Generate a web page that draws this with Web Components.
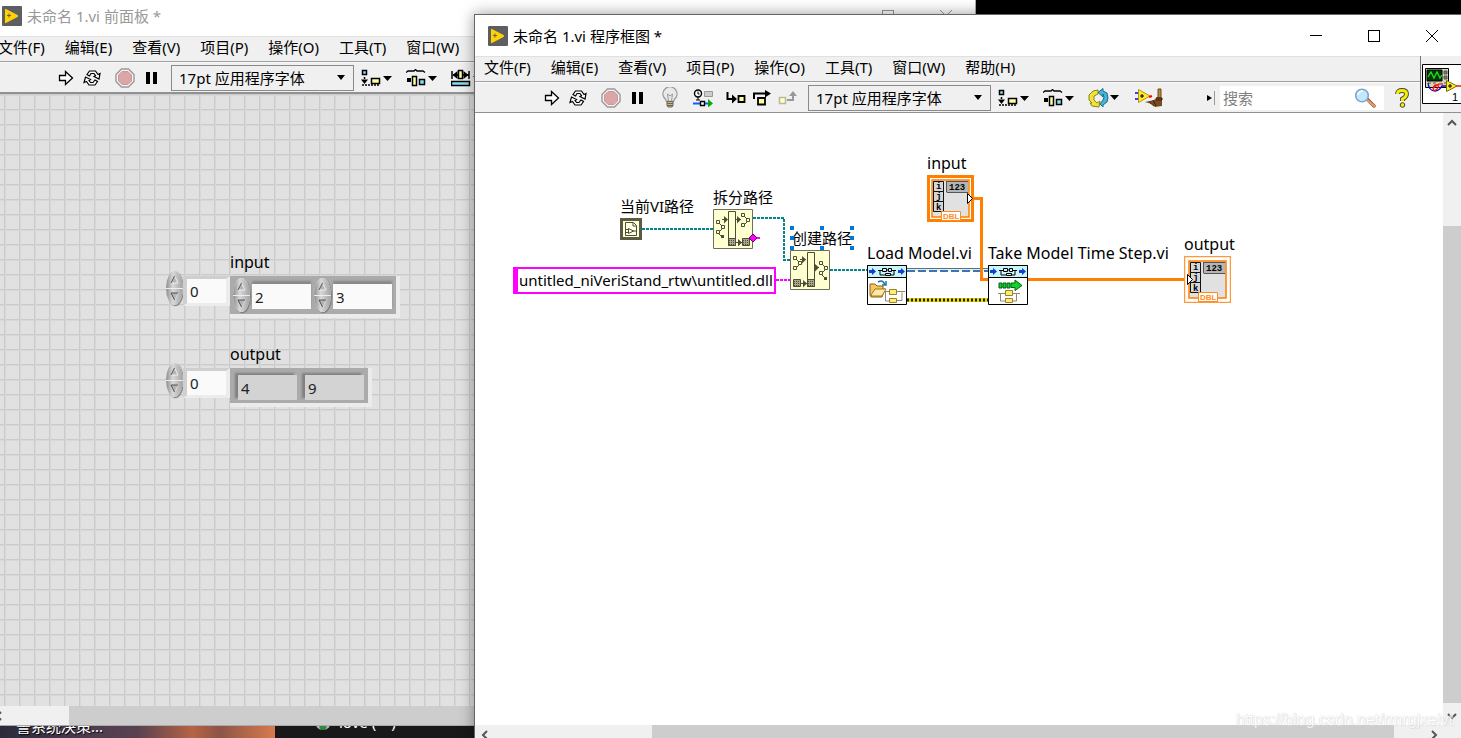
<!DOCTYPE html>
<html lang="zh-CN">
<head>
<meta charset="utf-8">
<title>未命名 1.vi</title>
<style>
    body {
        margin: 0;
        height: 100vh;
        overflow: hidden;
        background: #000;
        color: #000;
        font-family: "Noto Sans", "Noto Sans CJK SC", sans-serif;
        font-size: 15px;
    }

    /* windows on the desktop */
    .front-panel {
        position: absolute;
        top: -6px;
        left: -12px;
        right: 33.2%;
        bottom: 12px;
    }

    .block-diagram {
        position: absolute;
        top: 14px;
        left: 474px;
        right: -1px;
        bottom: -7px;
    }

    .watermark {
        position: absolute;
        right: 8px;
        bottom: 8px;
        font: 16px/20px "Liberation Sans", sans-serif;
        color: #fff;
        text-shadow: 0 0 1px #aaa, 1px 1px 1px #ddd;
        opacity: 0.7;
        pointer-events: none;
    }
</style>
</head>
<body>
<desk-top></desk-top>

<vi-window class="front-panel" heading="未命名 1.vi 前面板 *" inactive before="61" thumb="869" after="0">
    <vi-menubar slot="menu"></vi-menubar>
    <vi-toolbar slot="toolbar">
        <tool-group>
            <tool-button icon="run" label="运行"></tool-button>
            <tool-button icon="loop" label="连续运行"></tool-button>
        </tool-group>
        <tool-group>
            <tool-button icon="abort" label="中止执行"></tool-button>
            <tool-button icon="pause" label="暂停"></tool-button>
        </tool-group>
        <font-select></font-select>
        <tool-button wide icon="align" label="对齐对象"></tool-button>
        <tool-button wide icon="distribute" label="分布对象"></tool-button>
        <tool-button wide icon="resize" label="调整对象大小"></tool-button>
    </vi-toolbar>
    <panel-canvas>
        <array-control style="left: 177px; top: 158px" name="input" index="0" values="2,3"></array-control>
        <array-control style="left: 177px; top: 250px" name="output" index="0" values="4,9" indicator></array-control>
    </panel-canvas>
</vi-window>

<vi-window class="block-diagram" heading="未命名 1.vi 程序框图 *" before="158" thumb="742" after="30">
    <vi-menubar slot="menu"></vi-menubar>
    <vi-toolbar slot="toolbar">
        <tool-group>
            <tool-button icon="run" label="运行"></tool-button>
            <tool-button icon="loop" label="连续运行"></tool-button>
        </tool-group>
        <tool-group>
            <tool-button icon="abort" label="中止执行"></tool-button>
            <tool-button icon="pause" label="暂停"></tool-button>
        </tool-group>
        <tool-group>
            <tool-button icon="bulb" label="高亮显示执行过程"></tool-button>
        </tool-group>
        <tool-group>
            <tool-button icon="retain" label="保存连线值"></tool-button>
        </tool-group>
        <tool-group>
            <tool-button icon="into" label="开始单步执行"></tool-button>
            <tool-button icon="over" label="单步步过"></tool-button>
            <tool-button icon="out" label="单步步出"></tool-button>
        </tool-group>
        <font-select></font-select>
        <tool-button wide icon="align" label="对齐对象"></tool-button>
        <tool-button wide icon="distribute" label="分布对象"></tool-button>
        <tool-button wide icon="reorder" label="重新排序"></tool-button>
        <tool-button wide icon="clean" label="整理程序框图"></tool-button>
        <search-box slot="end"></search-box>
        <tool-button slot="end" help icon="help" label="即时帮助"></tool-button>
    </vi-toolbar>
    <vi-icon slot="pane" name="pane"></vi-icon>
    <diagram-canvas>
        <diagram-node style="left: 145px; top: 83px" icon="thisvi">当前VI路径</diagram-node>
        <diagram-node style="left: 238px; top: 74px" icon="strip">拆分路径</diagram-node>
        <diagram-node style="left: 315px; top: 115px" icon="build" selected>创建路径</diagram-node>
        <diagram-node style="left: 392px; top: 130px" icon="load" latin>Load Model.vi</diagram-node>
        <diagram-node style="left: 513px; top: 130px" icon="step" latin>Take Model Time Step.vi</diagram-node>
        <diagram-node style="left: 452px; top: 40px" icon="control" latin>input</diagram-node>
        <diagram-node style="left: 709px; top: 121px" icon="indicator" latin>output</diagram-node>
        <string-constant style="left: 38px; top: 154px">untitled_niVeriStand_rtw\untitled.dll</string-constant>
    </diagram-canvas>
</vi-window>

<div class="watermark">https://blog.csdn.net/rmrgjxeivt</div>

<script>
const ARROW_DOWN = `<path d="M22 7h9l-4.500 5z"/>`;

// every icon: [width, height, markup]
const ICONS = {
    logo: [20, 20, `
        <rect width="20" height="20" rx="1" fill="#5d5e62"/>
        <path d="M3 3.500Q3 2.500 4 3L15.500 9Q17 10 15.500 11L4 17Q3 17.500 3 16.500z" fill="#ffd200"/>
        <path d="M5 9.500h4M7 7.500v4" stroke="#5d5e62"/>`],
    run: [16, 16, `<path d="M1.500 5.500h6V1.500l7 6.500-7 6.500v-4h-6z" fill="#fff" stroke="#000" stroke-width="1.300"/>`],
    loop: [20, 18, `
        <g fill="#fff" stroke="#000" stroke-width="1.200">
            <path d="M5 5.500L7.500 2h6l2.500 3.500 2-1-1 5.500-5-2.500 1.500-1L12 4.500H9L7.500 7z"/>
            <path d="M15.500 12.500L13 16H7l-2.500-3.500-2.500 1L3.500 8l5 2.500-1.500 1L8.500 13.500H11l2-2.500z"/>
        </g>`],
    abort: [20, 20, `
        <path d="M6.500 1h7L19 6.500v7L13.500 19h-7L1 13.500v-7z" fill="#f7f7f7" stroke="#999" stroke-width="1.400"/>
        <path d="M7 3.500h6L16.500 7v6L13 16.500H7L3.500 13V7z" fill="#dda6a6" stroke="#c99"/>`],
    pause: [12, 14, `<path d="M1 1h4v12H1zM8 1h4v12H8z"/>`],
    bulb: [18, 22, `
        <path d="M5.500 14.500Q5 12.500 3 10.500A7 7 0 1 1 15 10.500Q13 12.500 12.500 14.500z" fill="#e9e9e9" stroke="#999" stroke-width="1.300"/>
        <path d="M7.500 14L6.500 7l2.500 2 2.500-2-1 7" fill="none" stroke="#999"/>
        <path d="M6 14.500h6v4l-1 1.500H7l-1-1.500z" fill="#c9b978" stroke="#6b6a58"/>
        <path d="M6 16.500h6M6 18.500h6" stroke="#666"/>`],
    retain: [20, 18, `
        <circle cx="5" cy="4.500" r="3.500" fill="#fff" stroke="#000" stroke-width="1.400"/>
        <path d="M5 2.500v2.500h1.500M5 8v3M3 11h4" stroke="#000" fill="none"/>
        <path d="M11.500 2.500h8v5h-8z" fill="#ccc" stroke="#999"/>
        <path d="M0 14.500h7M12 14.500h4" stroke="#06f" stroke-width="2"/>
        <path d="M7.500 12.500h4v4h-4z" fill="#fff" stroke="#000" stroke-width="1.400"/>
        <path d="M15 10l5 4.500-5 4z" fill="#0a1"/>`],
    into: [20, 14, `
        <path d="M1.500 1v7H9" fill="none" stroke="#000" stroke-width="2"/>
        <path d="M6 3.500L11 8l-5 4.500z"/>
        <path d="M12.500 5h6v6h-6z" fill="#ffffa0" stroke="#000" stroke-width="1.800"/>`],
    over: [18, 16, `
        <path d="M1 9V3.500h12" fill="none" stroke="#000" stroke-width="2"/>
        <path d="M12 0l6 3.500-6 4z"/>
        <path d="M5 8h7v6.500H5z" fill="#ffffa0" stroke="#000" stroke-width="1.800"/>`],
    out: [20, 14, `
        <path d="M1.500 6.500h6v6h-6z" fill="#ffffc8" stroke="#b9b99c" stroke-width="1.500"/>
        <path d="M9 9h6V4" fill="none" stroke="#999" stroke-width="2"/>
        <path d="M11 5l4-5 4 5z" fill="#999"/>`],
    align: [31, 18, `
        <path d="M1.500 1.500h4v4h-4z" fill="#7fe3f5" stroke="#000" stroke-width="1.500"/>
        <path d="M3.500 8v5M1 16h18" stroke="#000" stroke-width="1.500" stroke-dasharray="2 1"/>
        <path d="M0 10.500h7L3.500 15z"/>
        <path d="M10.500 9.500h8v5h-8z" fill="#ffff9c" stroke="#000" stroke-width="1.500"/>${ARROW_DOWN}`],
    distribute: [31, 18, `
        <path d="M0 3.500L2 2h6l1.500-1.500L11 2h6l2 1.500" fill="none" stroke="#000" stroke-width="1.300"/>
        <path d="M1 9h4v4H1z"/>
        <path d="M6.500 7.500h4v9h-4z" fill="#ffff9c" stroke="#000" stroke-width="1.500"/>
        <path d="M13.500 10.500h5v5h-5z" fill="#7fe3f5" stroke="#000" stroke-width="1.500"/>${ARROW_DOWN}`],
    resize: [31, 18, `
        <path d="M1 2v8M18 2v8M2 6h16" stroke="#000" stroke-width="1.500"/>
        <path d="M1.500 6l5-4v8zM17.500 6l-5-4v8z"/>
        <path d="M7.500 1.500h4v8h-4z" fill="#ffff9c" stroke="#000" stroke-width="1.500"/>
        <path d="M.5 12.500h18v4H.5z" fill="#7fe3f5" stroke="#000" stroke-width="1.500"/>${ARROW_DOWN}`],
    reorder: [31, 20, `
        <path d="M10 2L5 3 1 7v5l3 3h-2l2 3 7 1 1-6-3 2-3-3V8l4-2z" fill="#f0e23a" stroke="#8c8312"/>
        <path d="M10 4.500L15 .500V3l4 2 1 5-1 4-4 3v2l-3-3 3-4 1-3-1-3v3z" fill="#41b6d6" stroke="#1c6c87"/>${ARROW_DOWN}`],
    clean: [28, 20, `
        <path d="M0 5h3M0 11h3" stroke="#00f" stroke-width="1.500"/>
        <path d="M3.500 1.500L15 8 3.500 14.500z" fill="#ffe92e" stroke="#b59b00"/>
        <path d="M5 8h4M7 6v4" stroke="#000"/>
        <path d="M14 9l3-1" stroke="#f00" stroke-width="2"/>
        <path d="M23 1h3v9h-3z" fill="#b58a3a" stroke="#6b4a1c"/>
        <path d="M10 14l9-2 3-3 5 1v8l-7 1-3-3z" fill="#7a4a22"/>
        <path d="M14 14l5 4M18 12l3 6M21 10h6v2h-6" stroke="#3d230d" fill="none"/>`],
    help: [14, 20, `
        <path d="M2.500 6Q2.500 2.500 7 2.500T11.500 6q0 3-4 5v2" fill="none" stroke="#444" stroke-width="4.800"/>
        <path d="M2.500 6Q2.500 2.500 7 2.500T11.500 6q0 3-4 5v2" fill="none" stroke="#f6ec00" stroke-width="3"/>
        <circle cx="7.500" cy="17" r="2.300" fill="#f6ec00" stroke="#444"/>`],
    magnifier: [22, 20, `
        <path d="M13 11l7 7" stroke="#a54" stroke-width="3.500" stroke-linecap="round"/>
        <path d="M12 11l8 7" stroke="#d9a86a" stroke-width="2" stroke-linecap="round"/>
        <circle cx="8" cy="7.500" r="6.300" fill="#c4e8fb" stroke="#7ba3d8" stroke-width="1.600"/>
        <path d="M4 7q1-4 5-4" fill="none" stroke="#fff" stroke-width="1.500"/>`],
    pane: [40, 40, `
        <path d="M.5.5h39v39H.5z" fill="#fff" stroke="#000"/>
        <path d="M3.500 4.500h23v19h-23z" fill="#d8d6b8" stroke="#000"/>
        <path d="M5 6h15v11H5z" fill="#063806" stroke="#000"/>
        <path d="M6 13l3-5 3 6 3-6 3 6 2-3" fill="none" stroke="#1ee01e" stroke-width="1.300"/>
        <path d="M22 7h3v3h-3zM22 12h3v3h-3zM6 19h3M11 19h3M22 19h2" fill="#777" stroke="#555"/>
        <path d="M6 19q1 8 7 8 4 0 7-5h5" fill="none" stroke="#0a0acb" stroke-width="1.400"/>
        <path d="M11 25q1-5 4-4 3 1 0 4t-4 0q4-6 10-5M34 22h6" fill="none" stroke="#f11" stroke-width="1.300"/>
        <path d="M24.500 16.500L35 22l-10.500 5.500z" fill="#ffe92e" stroke="#7c6c00"/>
        <path d="M26 22h4M28 20v4" stroke="#000"/>
        <text x="30" y="37" font-family="Liberation Sans" font-size="11">1</text>`],
    thisvi: [22, 22, `
        <path d="M1.500 1.500h19v19h-19z" fill="#ffffcf" stroke="#5b5b45" stroke-width="3"/>
        <path d="M5.500 4.500h8l3 3v10h-11z" fill="#ffffe4" stroke="#4c4c38"/>
        <path d="M13 5v3h3M8.500 10.500v5l5-2.500zM6 11.500h2M6 14.500h2M13 13h3" fill="none" stroke="#4c4c38"/>`],
    strip: [40, 40, `
        <path d="M.5.5h39v39H.5z" fill="#ffffcf" stroke="#6e6e5a"/>
        <g fill="#ffffcf" stroke="#4c4c38">
            <path d="M3.500 11.500h3v3h-3zM8.500 16.500h3v3h-3zM3.500 21.500h3v3h-3z"/>
            <path d="M15.500 2.500h7v34h-7z"/>
            <path d="M28.500 4.500h3v3h-3zM33.500 9.500h3v3h-3zM28.500 14.500h3v3h-3z"/>
            <path d="M15.500 29.500h7v7h-7zM29.500 29.500h7v7h-7z" fill="#a9a98c"/>
            <path d="M6 14l3 3M9 20l-3 3M6 25l2 2M31 7l3 3M34 13l-3 3" fill="none"/>
            <path d="M16 31.500h6M16 33.500h6M16 35.500h6M30 31.500h6M30 33.500h6M30 35.500h6" stroke-dasharray="1 1"/>
            <path d="M9 10.500h5M23 10.500h5M23 33.500h6"/>
        </g>
        <path d="M11 7l4 3.500-4 4zM24 7l4 3.500-4 4zM25 30l4 3.500-4 4zM8 26h3v3H8z" fill="#4c4c38"/>`],
    build: [40, 40, `
        <path d="M.5.5h39v39H.5z" fill="#ffffcf" stroke="#6e6e5a"/>
        <g fill="#ffffcf" stroke="#4c4c38">
            <path d="M3.500 6.500h3v3h-3zM8.500 11.500h3v3h-3zM3.500 16.500h3v3h-3z"/>
            <path d="M17.500 2.500h7v34h-7z"/>
            <path d="M29.500 11.500h3v3h-3zM34.500 16.500h3v3h-3zM29.500 21.500h3v3h-3z"/>
            <path d="M3.500 29.500h7v7h-7zM17.500 29.500h7v7h-7z" fill="#a9a98c"/>
            <path d="M6 9l3 3M9 15l-3 3M32 14l3 3M35 20l-3 3M32 25l3 3" fill="none"/>
            <path d="M4 31.500h6M4 33.500h6M4 35.500h6M18 31.500h6M18 33.500h6M18 35.500h6" stroke-dasharray="1 1"/>
            <path d="M10 9.500h6M24 17.500h5M11 33.500h6"/>
        </g>
        <path d="M12 6l4 3.500-4 4zM25 14l4 3.500-4 4zM13 30l4 3.500-4 4zM34 27h3v3h-3z" fill="#4c4c38"/>`],
};

const SUBVI_FRAME = `
    <path d="M.5.5h39v39H.5z" fill="#fff" stroke="#000"/>
    <path d="M.5.5h39v12H.5z" fill="#c9f6fd" stroke="#000"/>
    <path d="M2 5h3V3l4 3.500-4 3.500V8H2zM31 5h3V3l4 3.500-4 3.500V8h-3z" fill="#1440d0"/>
    <path d="M11 5.500h4M15.500 3.500h4v3h-4zM21.500 3.500h3v3h-3zM18.500 8.500h5v2h-5zM25 5.500h4M13 6v4h5M27 6v4h-4M20 5h2" fill="none" stroke="#000"/>`;

ICONS.load = [40, 40, `${SUBVI_FRAME}
    <path d="M3 19h5l2 2h6v3h2l-3 8H4l-1-2z" fill="#f6c761" stroke="#8c6014"/>
    <path d="M4 30l4-6h11l-4 7H5z" fill="#ffe9a6" stroke="#a77421"/>
    <path d="M11 17q5-3 7 3M15 20h4v-4" fill="none" stroke="#1d77a8" stroke-width="1.500"/>
    <path d="M18 26.500h20M18.500 27v9H23M30 35.500h5v-8" fill="none" stroke="#8b8b73"/>
    <path d="M22.500 24.500h7v5h-7zM22.500 33.500h7v4h-7z" fill="#ffee75" stroke="#9c8126"/>`];

ICONS.step = [40, 40, `${SUBVI_FRAME}
    <path d="M11 18h3v5h-3zM15 18h3v5h-3zM19 18h3v5h-3zM23 18h4v-3l7 5.500-7 5v-3h-4z" fill="#0bd42a" stroke="#05620f"/>
    <path d="M10 28.500h22M12.500 29v7H17M24 36h4.500v-7" fill="none" stroke="#8b8b73"/>
    <path d="M17.500 25.500h7v5h-7zM17.500 33.500h7v4h-7z" fill="#ffee75" stroke="#9c8126"/>`];

// array terminal; controls have a thick frame and an output arrow, indicators a thin one and an input arrow
const terminal = (frame, arrow) => `${frame}
    <path d="M5 5h37v37H5z" fill="#e1e1e1" stroke="#ff7f00" stroke-width="1.500"/>
    <path d="M19 6h22v12H19z" fill="#b5b5b5"/>
    <path d="M19 6.500h22M20 17.500h21M19.500 7v10" stroke="#555" fill="none"/>
    <path d="M6.500 6.500h10v10h-10zM6.500 16.500h10v10h-10zM6.500 26.500h10v10h-10z" fill="#d6d6d6" stroke="#111"/>
    <g font-family="Liberation Mono" font-weight="bold" font-size="9">
        <text x="9" y="14">i</text><text x="9" y="24">j</text><text x="9" y="35">k</text>
        <text x="22" y="15">123</text>
    </g>
    <path d="M14.500 36.500h19v9h-19z" fill="#fff" stroke="#ff8c1a"/>
    <text x="16" y="44" font-family="Liberation Sans" font-size="8" font-weight="bold" fill="#ff8c1a">DBL</text>
    ${arrow}`;

ICONS.control = [47, 47, terminal(
    `<path d="M1.500 1.500h44v44h-44z" fill="#fff" stroke="#ff7f00" stroke-width="3"/>`,
    `<path d="M40.500 18.500l5 5-5 5z" fill="#fff" stroke="#000"/>`)];
ICONS.indicator = [47, 47, terminal(
    `<path d="M.5.5h46v46H.5z" fill="#fff" stroke="#ff9a3c" stroke-width="1.500"/>`,
    `<path d="M3.500 18.500l5 5-5 5z" fill="#fff" stroke="#000"/>`)];

function icon(name) {
    const [w, h, body] = ICONS[name];
    return `<svg width="${w}" height="${h}" viewBox="0 0 ${w} ${h}" aria-hidden="true">${body}</svg>`;
}

class ViElement extends HTMLElement {
    constructor() {
        super();
        this.attachShadow({ mode: "open" });
    }

    connectedCallback() {
        this.shadowRoot.innerHTML = this.render();
    }
}

class ViIcon extends ViElement {
    render() {
        return `
            <style>
                :host { display: block; }
                svg { display: block; }
            </style>
            ${icon(this.getAttribute("name"))}
        `;
    }
}

class DeskTop extends ViElement {
    render() {
        return `
            <style>
                :host {
                    display: flex;
                    align-items: flex-end;
                    height: 100vh;
                    color: #fff;
                    font-size: 15px;
                    line-height: 20px;
                }
                .wallpaper {
                    box-sizing: border-box;
                    width: 275px;
                    padding: 0 16px 2px;
                    background: linear-gradient(90deg, #2b2a3a, #4a3c50 30%, #5a4150 50%, #b56345 70%, #8d5448 80%, #d87a4c);
                    text-shadow: 1px 1px 1px #000;
                }
                .panel {
                    flex: 1;
                    display: flex;
                    align-items: center;
                    gap: 8px;
                    padding: 0 0 6px 40px;
                    background: #191919;
                }
                i {
                    width: 16px;
                    height: 16px;
                    border-radius: 8px;
                    background: radial-gradient(circle at 50% 80%, #2c8a3c 3px, #b5b5b5 4px);
                }
            </style>
            <div class="wallpaper">警系统决策...</div>
            <div class="panel"><i></i><span>love (一)</span></div>
        `;
    }
}

class ViWindow extends ViElement {
    render() {
        const share = name => this.getAttribute(name);
        return `
            <style>
                :host {
                    display: flex;
                    flex-direction: column;
                    box-sizing: border-box;
                    border: 1px solid #666;
                    background: #fff;
                    box-shadow: 0 0 14px rgba(0, 0, 0, 0.4);
                }
                :host([inactive]) { border-color: #aaa; box-shadow: none; }
                .title {
                    display: flex;
                    align-items: center;
                    height: 41px;
                    padding-left: 13px;
                }
                h1 {
                    flex: 1;
                    margin: 0 0 0 5px;
                    font-size: 15px;
                    font-weight: normal;
                    line-height: 20px;
                }
                :host([inactive]) .title { color: #999; }
                .title button {
                    display: grid;
                    place-items: center;
                    width: 58px;
                    height: 41px;
                    padding: 0;
                    border: 0;
                    background: none;
                    color: inherit;
                }
                button svg { fill: none; stroke: currentColor; shape-rendering: crispEdges; }
                button .close { shape-rendering: auto; }
                .bars { display: flex; background: #f0f0f0; border-bottom: 1px solid #919191; }
                .rows { flex: 1; min-width: 0; }
                .pane {
                    display: flex;
                    align-items: center;
                    width: 39px;
                    padding-left: 1px;
                    overflow: hidden;
                    border-left: 1px solid #777;
                }
                .view {
                    flex: 1;
                    display: grid;
                    grid-template: minmax(0, 1fr) 19px / minmax(0, 1fr) 18px;
                    min-height: 0;
                    background: #f0f0f0;
                }
            </style>
            <header class="title">
                ${icon("logo")}
                <h1>${this.getAttribute("heading")}</h1>
                <button aria-label="最小化"><svg width="12" height="12"><path d="M0 5.500h12"/></svg></button>
                <button aria-label="最大化"><svg width="12" height="12"><path d="M.5.5h11v11H.5z"/></svg></button>
                <button aria-label="关闭"><svg class="close" width="12" height="12"><path d="M0 0l12 12M12 0L0 12"/></svg></button>
            </header>
            <div class="bars">
                <div class="rows">
                    <slot name="menu"></slot>
                    <slot name="toolbar"></slot>
                </div>
                <div class="pane"><slot name="pane"></slot></div>
            </div>
            <div class="view">
                <slot></slot>
                <scroll-bar vertical before="94" thumb="477" after="3"></scroll-bar>
                <scroll-bar before="${share("before")}" thumb="${share("thumb")}" after="${share("after")}"></scroll-bar>
            </div>
        `;
    }
}

class ScrollBar extends ViElement {
    render() {
        const vertical = this.hasAttribute("vertical");
        const back = vertical ? "M1 7l4-4 4 4" : "M7 1L3 5l4 4";
        const forward = vertical ? "M1 3l4 4 4-4" : "M3 1l4 4-4 4";
        const grow = name => `style="flex-grow: ${this.getAttribute(name)}"`;
        return `
            <style>
                :host { display: flex; background: #f0f0f0; }
                :host([vertical]) { flex-direction: column; }
                button {
                    display: grid;
                    place-items: center;
                    flex: 0 0 19px;
                    padding: 0;
                    border: 0;
                    background: none;
                }
                svg { fill: none; stroke: #555; stroke-width: 2; }
                span { flex: 0 1 0px; }
                .thumb { background: #cdcdcd; }
            </style>
            <button aria-label="back"><svg width="10" height="10"><path d="${back}"/></svg></button>
            <span ${grow("before")}></span>
            <span class="thumb" ${grow("thumb")}></span>
            <span ${grow("after")}></span>
            <button aria-label="forward"><svg width="10" height="10"><path d="${forward}"/></svg></button>
        `;
    }
}

class ViMenubar extends ViElement {
    render() {
        const items = ["文件(F)", "编辑(E)", "查看(V)", "项目(P)", "操作(O)", "工具(T)", "窗口(W)", "帮助(H)"];
        return `
            <style>
                :host { display: block; }
                nav {
                    display: flex;
                    align-items: flex-start;
                    gap: 20px;
                    box-sizing: border-box;
                    height: 26px;
                    padding-left: 9px;
                    border-top: 1px solid #e0e0e0;
                    border-bottom: 1px solid #a0a0a0;
                }
                button {
                    padding: 0;
                    border: 0;
                    background: none;
                    color: inherit;
                    font: inherit;
                    line-height: 20px;
                    white-space: nowrap;
                }
            </style>
            <nav>${items.map(item => `<button>${item}</button>`).join("")}</nav>
        `;
    }
}

class ViToolbar extends ViElement {
    render() {
        return `
            <style>
                :host {
                    display: flex;
                    justify-content: space-between;
                    box-sizing: border-box;
                    height: 30px;
                    padding-left: 64px;
                    border-top: 1px solid #fafafa;
                }
                .start, .end { display: flex; align-items: center; }
            </style>
            <div class="start"><slot></slot></div>
            <div class="end"><slot name="end"></slot></div>
        `;
    }
}

class ToolGroup extends ViElement {
    render() {
        return `
            <style>
                :host { display: flex; margin-right: 7px; }
            </style>
            <slot></slot>
        `;
    }
}

class ToolButton extends ViElement {
    render() {
        return `
            <style>
                :host { display: block; width: 26px; }
                :host([wide]) { width: 45px; }
                :host([help]) { width: 36px; }
                button {
                    display: grid;
                    place-items: center;
                    width: 100%;
                    height: 26px;
                    padding: 0;
                    border: 0;
                    background: none;
                }
            </style>
            <button aria-label="${this.getAttribute("label")}">${icon(this.getAttribute("icon"))}</button>
        `;
    }
}

class FontSelect extends ViElement {
    render() {
        return `
            <style>
                :host { display: grid; width: 183px; }
                select, svg { grid-area: 1 / 1; }
                select {
                    appearance: none;
                    height: 26px;
                    padding: 0 7px;
                    border: 1px solid #8a8a8a;
                    border-radius: 0;
                    background: #f0f0f0;
                    color: inherit;
                    font: inherit;
                }
                svg { place-self: center end; margin-right: 8px; pointer-events: none; }
            </style>
            <select aria-label="字体"><option>17pt 应用程序字体</option></select>
            <svg width="10" height="6"><path d="M1 0h8L5 5z"/></svg>
        `;
    }
}

class SearchBox extends ViElement {
    render() {
        return `
            <style>
                :host { display: flex; align-items: center; gap: 3px; }
                .field { display: flex; align-items: center; width: 164px; height: 24px; background: #fff; }
                input {
                    flex: 1;
                    min-width: 0;
                    padding: 0 3px;
                    border: 0;
                    background: none;
                    font: inherit;
                }
                input::placeholder { color: #808080; }
                button { display: grid; padding: 0 8px 0 0; border: 0; background: none; }
            </style>
            <svg width="11" height="16"><path d="M1 5v6l5-3z"/><path d="M8.500 1v14" stroke="#999"/></svg>
            <div class="field">
                <input type="search" placeholder="搜索" aria-label="搜索">
                <button aria-label="搜索">${icon("magnifier")}</button>
            </div>
        `;
    }
}

class PanelCanvas extends ViElement {
    render() {
        return `
            <style>
                :host {
                    display: block;
                    position: relative;
                    overflow: hidden;
                    border-top: 1px solid #919191;
                    background-color: #e1e1e1;
                    background-image:
                        linear-gradient(90deg, #cbcbcb 1px, #d8d8d8 1px, #d8d8d8 2px, transparent 2px),
                        linear-gradient(#cbcbcb 1px, #d8d8d8 1px, #d8d8d8 2px, transparent 2px);
                    background-size: 15px 15px;
                }
            </style>
            <slot></slot>
        `;
    }
}

class SpinButtons extends ViElement {
    render() {
        return `
            <style>
                :host {
                    display: flex;
                    flex-direction: column;
                    gap: 1px;
                    width: 17px;
                    height: 34px;
                    overflow: hidden;
                    border-radius: 50%;
                    background: #eee;
                    box-shadow: 1px 1px 1px #777;
                }
                button {
                    display: grid;
                    place-items: center;
                    flex: 1;
                    padding: 0;
                    border: 0;
                    background: linear-gradient(90deg, #8d8d8d, #d8d8d8 40%, #a2a2a2);
                }
                svg { fill: #b5b5b5; stroke: #4b4b4b; }
            </style>
            <button aria-label="增量"><svg width="9" height="9"><path d="M1 8l3.500-7L8 8z" stroke="#eee"/><path d="M1 8l3.500-7"/></svg></button>
            <button aria-label="减量"><svg width="9" height="9"><path d="M1 1h7L4.500 8z" stroke="#eee"/><path d="M8 1H1l3.500 7"/></svg></button>
        `;
    }
}

class ArrayControl extends ViElement {
    render() {
        const indicator = this.hasAttribute("indicator");
        const name = this.getAttribute("name");
        const cells = this.getAttribute("values").split(",").map((value, i) => `
            <div class="cell">
                ${indicator ? "" : "<spin-buttons></spin-buttons>"}
                <input value="${value}" aria-label="${name} ${i}" ${indicator ? "readonly" : ""}>
            </div>`).join("");
        return `
            <style>
                :host {
                    position: absolute;
                    display: grid;
                    grid-template-columns: 17px 47px auto;
                    align-items: start;
                    font-size: 15px;
                }
                label { grid-column: 3; height: 24px; line-height: 20px; font-size: 16px; }
                .spin { grid-column: 1; margin-top: -5px; }
                input {
                    box-sizing: border-box;
                    height: 24px;
                    padding: 0 3px;
                    border: 0;
                    border-radius: 0;
                    background: #fafafa;
                    color: #222;
                    font: inherit;
                }
                .index {
                    width: 47px;
                    height: 30px;
                    border: solid;
                    border-width: 3px 4px;
                    border-color: #cfcfcf #ececec #ececec #cfcfcf;
                }
                .shell {
                    display: flex;
                    border: solid;
                    border-width: 0 4px 4px 0;
                    border-color: #ebebeb;
                    background: #ababab;
                }
                .cell { display: flex; align-items: center; gap: 2px; padding: 2px 0 2px 3px; }
                .cell input {
                    width: 59px;
                    height: 25px;
                    margin: 6px 0 3px;
                    box-shadow: 0 -3px 2px #888;
                }
                .cell:last-child { padding-right: 4px; }
                :host([indicator]) .cell { padding: 2px 0 0 8px; }
                :host([indicator]) .cell:last-child { padding-right: 4px; }
                :host([indicator]) .cell input { margin: 5px 0 3px; background: #d3d3d3; box-shadow: -3px -2px 2px #808080; }
            </style>
            <label for="index">${name}</label>
            <spin-buttons class="spin"></spin-buttons>
            <input class="index" id="index" value="${this.getAttribute("index")}">
            <div class="shell">${cells}</div>
        `;
    }
}

class DiagramCanvas extends ViElement {
    render() {
        return `
            <style>
                :host { display: block; position: relative; overflow: hidden; background: #fff; }
                svg { position: absolute; top: 0; left: 0; width: 100%; height: 100%; fill: none; }
                .path { stroke: #088; stroke-width: 2; stroke-dasharray: 3 1; }
                .string { stroke: #f0f; stroke-width: 2; stroke-dasharray: 3 1; }
                .error { stroke: #e8dd00; stroke-width: 4; }
                .error-dots { stroke: #222; stroke-width: 3; stroke-dasharray: 2 2; }
                .ref { stroke: #3b74b8; }
                .ref-dash { stroke: #3b74b8; stroke-width: 2; stroke-dasharray: 8 3; }
                .ref-fill { stroke: #f5eebb; stroke-width: 2; }
                .double { stroke: #ff7f00; stroke-width: 3; }
            </style>
            <slot></slot>
            <svg aria-hidden="true">
                <path class="path" d="M167 116h71M278 105h31v42h6M355 157h37"/>
                <path class="string" d="M301 167h14M278 125h7"/>
                <path d="M278 121l4 4-4 4-4-4z" fill="#f0f" stroke="#606"/>
                <path class="ref-fill" d="M432 157h81"/>
                <path class="ref" d="M432 155.500h81"/>
                <path class="ref-dash" d="M432 158h81"/>
                <path class="error" d="M432 187h81"/>
                <path class="error-dots" d="M432 187h81"/>
                <path class="double" d="M498 85.500h8.500v81h6.500M553 166.500h156"/>
            </svg>
        `;
    }
}

class DiagramNode extends ViElement {
    render() {
        const handles = this.hasAttribute("selected")
            ? `<svg class="handles" width="64" height="24" aria-hidden="true">
                   <path d="M0 0h4v4H0zM30 0h4v4h-4zM60 0h4v4h-4zM0 10h4v4H0zM60 10h4v4h-4zM0 20h4v4H0zM30 20h4v4h-4zM60 20h4v4h-4z" fill="#0078d7"/>
               </svg>`
            : "";
        return `
            <style>
                :host {
                    position: absolute;
                    display: grid;
                    gap: 2px;
                    line-height: 20px;
                    white-space: nowrap;
                }
                :host([latin]) { font-size: 16px; }
                .label { position: relative; }
                :host([selected]) .label { padding-left: 2px; }
                .handles { position: absolute; top: -2px; left: 0; }
                svg { display: block; }
            </style>
            <span class="label"><slot></slot>${handles}</span>
            ${icon(this.getAttribute("icon"))}
        `;
    }
}

class StringConstant extends ViElement {
    render() {
        return `
            <style>
                :host {
                    position: absolute;
                    padding: 1px 1px 2px;
                    border: 2px solid #f0f;
                    border-left-width: 5px;
                    background: #fff;
                    font-size: 15px;
                    line-height: 20px;
                    white-space: nowrap;
                }
            </style>
            <slot></slot>
        `;
    }
}

customElements.define("vi-icon", ViIcon);
customElements.define("desk-top", DeskTop);
customElements.define("scroll-bar", ScrollBar);
customElements.define("vi-menubar", ViMenubar);
customElements.define("vi-toolbar", ViToolbar);
customElements.define("tool-group", ToolGroup);
customElements.define("tool-button", ToolButton);
customElements.define("font-select", FontSelect);
customElements.define("search-box", SearchBox);
customElements.define("spin-buttons", SpinButtons);
customElements.define("array-control", ArrayControl);
customElements.define("panel-canvas", PanelCanvas);
customElements.define("diagram-node", DiagramNode);
customElements.define("string-constant", StringConstant);
customElements.define("diagram-canvas", DiagramCanvas);
customElements.define("vi-window", ViWindow);
</script>
</body>
</html>
